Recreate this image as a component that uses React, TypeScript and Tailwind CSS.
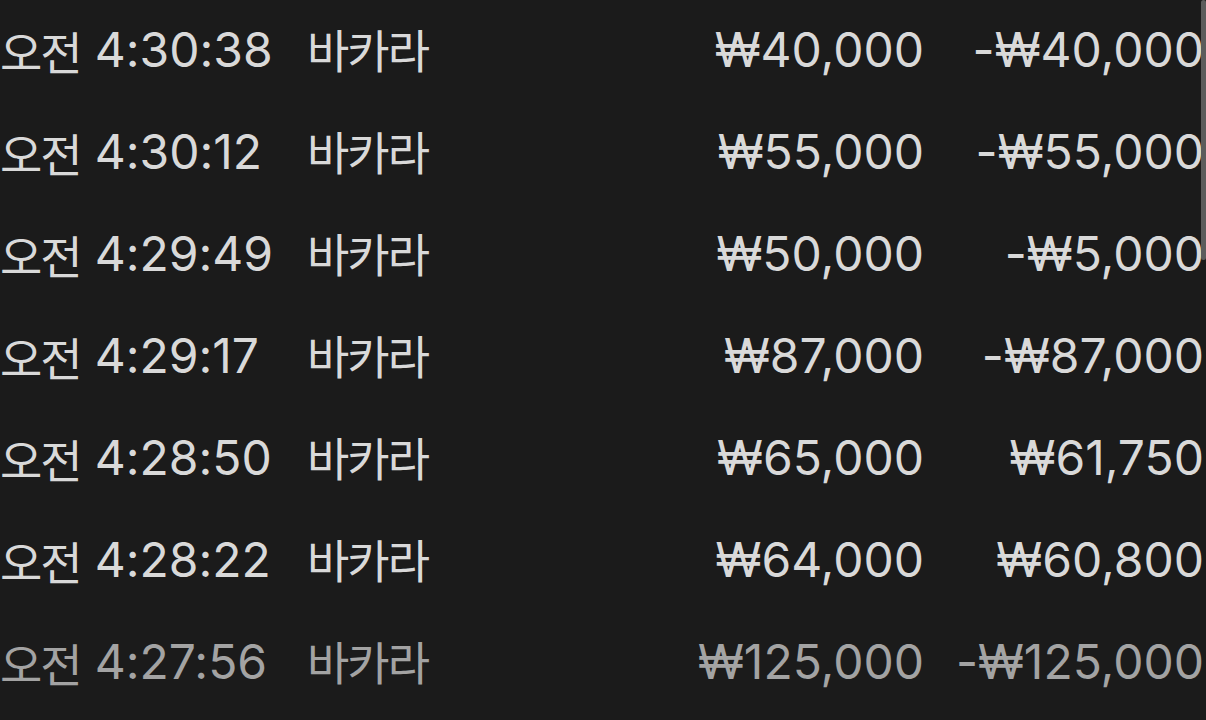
import React from 'react';

type Row = { time: string; game: string; bet: string; result: string };

const rows: Row[] = [
  { time: '4:30:38', game: '바카라', bet: '₩40,000', result: '-₩40,000' },
  { time: '4:30:12', game: '바카라', bet: '₩55,000', result: '-₩55,000' },
  { time: '4:29:49', game: '바카라', bet: '₩50,000', result: '-₩5,000' },
  { time: '4:29:17', game: '바카라', bet: '₩87,000', result: '-₩87,000' },
  { time: '4:28:50', game: '바카라', bet: '₩65,000', result: '₩61,750' },
  { time: '4:28:22', game: '바카라', bet: '₩64,000', result: '₩60,800' },
  { time: '4:27:56', game: '바카라', bet: '₩125,000', result: '-₩125,000' },
];

const Hangul: React.FC<{ children: React.ReactNode }> = ({ children }) => (
  <span className="font-['Noto_Sans_CJK_KR',sans-serif] text-[46px] tracking-[-2px]">{children}</span>
);

const App: React.FC = () => {
  return (
    <div className="relative h-[720px] w-[1206px] overflow-hidden bg-[#1b1b1b] font-['Inter','Noto_Sans_CJK_KR',sans-serif] text-[48px] leading-none [font-feature-settings:'calt'_0]">
      <div className="flex flex-col -mt-px">
        {rows.map((r, i) => (
          <div
            key={r.time}
            className={`flex h-[102px] items-center ${i === rows.length - 1 ? 'text-[#a3a3a3]' : 'text-[#d9d9d9]'}`}
          >
            <div className="flex w-[307px] items-center whitespace-nowrap">
              <Hangul>오전</Hangul>
              <span className="ml-[14px]">{r.time}</span>
            </div>
            <div className="w-[308px]">
              <Hangul>{r.game}</Hangul>
            </div>
            <div className="w-[309px] text-right whitespace-nowrap">{r.bet}</div>
            <div className="w-[280px] text-right whitespace-nowrap">{r.result}</div>
          </div>
        ))}
      </div>
      <div className="absolute right-0 top-0 h-[260px] w-[5px] rounded-full bg-[#5c5c5c]" />
    </div>
  );
};

export default App;
